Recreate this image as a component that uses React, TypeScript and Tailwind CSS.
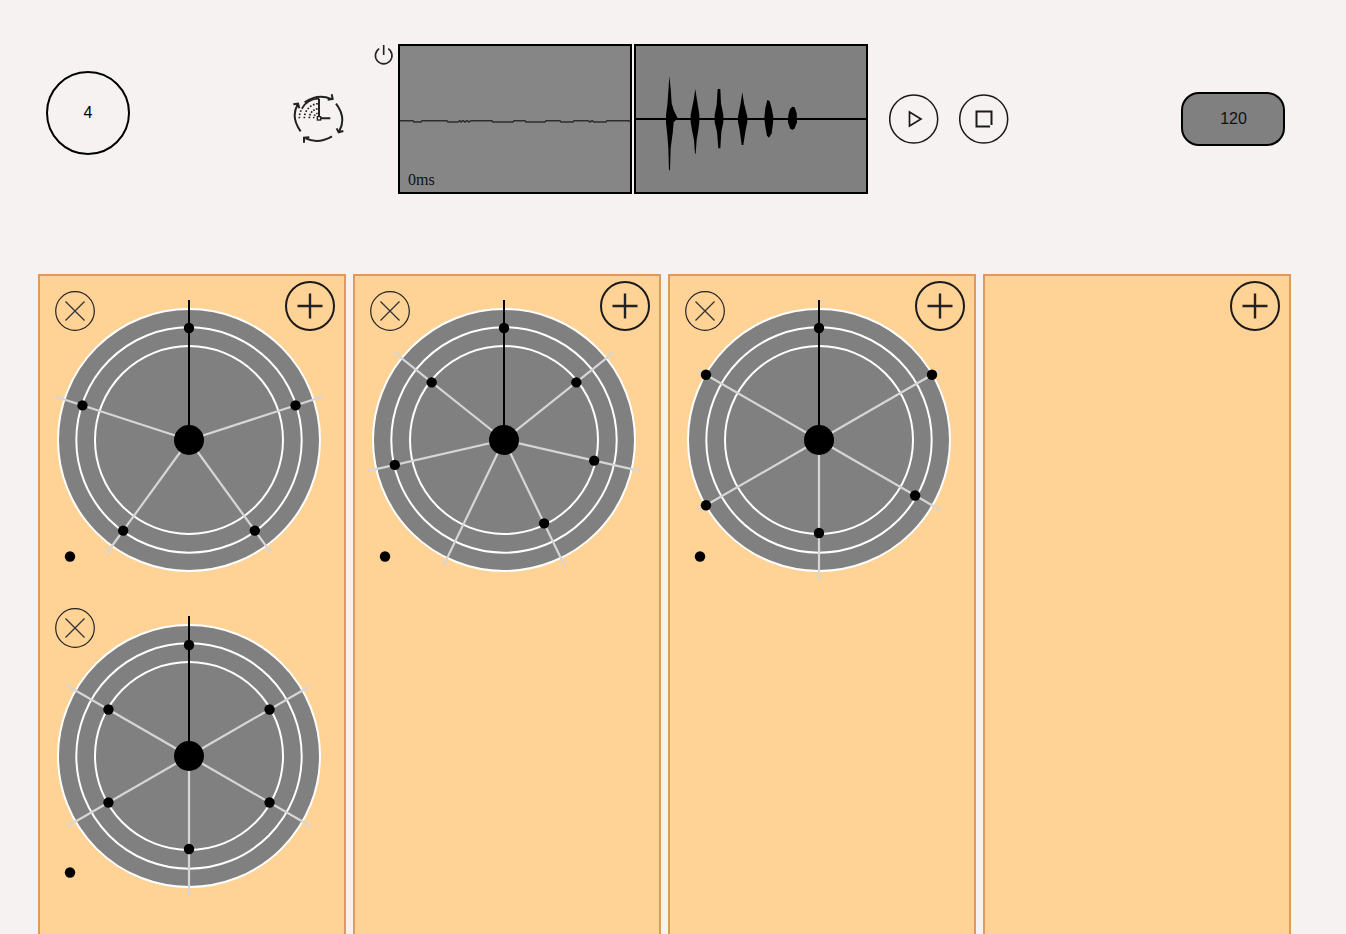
const CENTER = 146;

type Dot = [number, number];

function Wheel({ spokes, dots }: { spokes: number; dots: Dot[] }) {
  const at = (i: number, r: number) => {
    const a = (i / spokes) * Math.PI * 2;
    return [CENTER + Math.sin(a) * r, CENTER - Math.cos(a) * r];
  };
  return (
    <svg width="292" height="292" className="ml-[3px] block">
      <circle cx={CENTER} cy={CENTER} r="131" fill="#808080" stroke="#fff" strokeWidth="2" />
      <circle cx={CENTER} cy={CENTER} r="112.7" fill="none" stroke="#fff" strokeWidth="2" />
      <circle cx={CENTER} cy={CENTER} r="94" fill="none" stroke="#fff" strokeWidth="2" />
      {Array.from({ length: spokes }).map((_, i) => {
        const [x, y] = at(i, 140);
        return i === 0 ? null : <line key={i} x1={CENTER} y1={CENTER} x2={x} y2={y} stroke="#d6d6d6" strokeWidth="2.2" />;
      })}
      <line x1={CENTER} y1={CENTER} x2={CENTER} y2={CENTER - 140} stroke="#000" strokeWidth="2" />
      {dots.map(([i, r]) => {
        const [x, y] = at(i, r);
        return <circle key={i} cx={x} cy={y} r="5.2" fill="#000" />;
      })}
      <circle cx={CENTER} cy={CENTER} r="15" fill="#000" />
      <circle cx="27" cy="262.5" r="5.2" fill="#000" />
    </svg>
  );
}

function CloseButton() {
  return (
    <svg width="40" height="40" viewBox="0 0 40 40" className="absolute left-[15px] top-[15px]">
      <circle cx="20" cy="20" r="19.3" fill="none" stroke="#222" strokeWidth="1.2" />
      <path d="M10.5 10.5 L29.5 29.5 M29.5 10.5 L10.5 29.5" stroke="#333" strokeWidth="1.3" />
    </svg>
  );
}

function AddButton() {
  return (
    <svg width="50" height="50" viewBox="0 0 50 50" className="absolute left-[245px] top-[5px]">
      <circle cx="25" cy="25" r="24" fill="none" stroke="#1a1a1a" strokeWidth="2" />
      <path d="M12.5 25 H37.5 M25 12.5 V37.5" stroke="#222" strokeWidth="2.4" />
    </svg>
  );
}

function WheelBlock({ spokes, dots }: { spokes: number; dots: Dot[] }) {
  return (
    <div className="relative h-[316.5px] pt-[17.5px]">
      <CloseButton />
      <Wheel spokes={spokes} dots={dots} />
    </div>
  );
}

function Panel({ wheels }: { wheels: { spokes: number; dots: Dot[] }[] }) {
  return (
    <div className="relative h-[700px] w-[308px] shrink-0 border-2 border-[#e0985c] bg-[#ffd296]">
      <AddButton />
      {wheels.map((w, i) => (
        <WheelBlock key={i} spokes={w.spokes} dots={w.dots} />
      ))}
    </div>
  );
}

function ClockIcon() {
  return (
    <svg width="56" height="56" viewBox="30 170 168 168" className="ml-[160px] mt-[91px] shrink-0" fill="none" stroke="#222">
      <g strokeWidth="6">
        <path d="M74 204 Q115 176 153 194 M155 180 L158 194 L143 196" />
        <path d="M168 208 Q200 250 178 290 M190 290 L176 294 L170 282" />
        <path d="M156 306 Q115 330 77 312 M72 325 L72 310 L88 309" />
        <path d="M62 291 Q32 250 52 212 M40 210 L54 208 L58 222" />
      </g>
      <path d="M117 193 V247 M122 252 H151" strokeWidth="6" />
      <rect x="112" y="247" width="10" height="10" strokeWidth="4" />
      <g strokeWidth="5">
        <path d="M101 252 A16 16 0 0 1 117 236" strokeDasharray="4 4" />
        <path d="M88 252 A29 29 0 0 1 117 223" strokeDasharray="5 4" />
        <path d="M73 252 A44 44 0 0 1 117 208" strokeDasharray="5 5" />
        <path d="M58 252 A59 59 0 0 1 117 193" strokeDasharray="5 5 5 5 5 5 100" />
      </g>
    </svg>
  );
}

function PowerIcon() {
  return (
    <svg width="22" height="22" viewBox="0 0 22 22" className="ml-[27px] mt-[44px] shrink-0" fill="none" stroke="#222" strokeWidth="1.6">
      <path d="M6.2 4.6 A8.3 8.3 0 1 0 15.2 4.6" />
      <path d="M10.7 1 V11" />
    </svg>
  );
}

function WaveBoxOne() {
  return (
    <div className="relative ml-[3px] mt-[44px] h-[150px] w-[234px] shrink-0 border-2 border-black bg-[#868686]">
      <svg width="230" height="146" className="block">
        <path
          d="M0 74.7 H13 L14 76 H21 L22 74.7 H47 L48 76 H58 L60 74.7 L61 76 L63 74.7 L65 76 L67 74.7 L69 76 L71 74.7 H92 L93 76 H113 L114 74.7 H125 L126 76 H145 L146 74.7 H160 L161 76 H173 L174 74.7 H188 L190 76 L192 74.7 L194 76 H206 L207 74.7 H229 L229 76"
          fill="none"
          stroke="#2e2e2e"
          strokeWidth="1.5"
        />
      </svg>
      <span className="absolute left-[8px] top-[125px] font-['Liberation_Serif',serif] text-[16px] leading-[18px] text-[#111]">0ms</span>
    </div>
  );
}

function WaveBoxTwo() {
  return (
    <div className="ml-[2px] mt-[44px] h-[150px] w-[234px] shrink-0 border-2 border-black bg-[#808080]">
      <svg width="230" height="146" className="block">
        <line x1="0" y1="73" x2="230" y2="73" stroke="#000" strokeWidth="2" />
        <g transform="translate(19 19) scale(0.3333)" fill="#000">
          <path d="M43 33 L47 70 L50 115 L56 135 L68 160 L56 172 L53 205 L47 250 L45 316 L42 316 L40 250 L37 210 L33 175 L33 150 L37 120 L40 80 Z" />
          <path d="M121 72 L126 105 L130 130 L133 150 L133 172 L130 195 L125 225 L122 266 L120 266 L117 225 L111 195 L107 172 L107 150 L111 130 L116 105 Z" />
          <path d="M188 72 L196 72 L198 115 L205 150 L205 172 L199 200 L196 250 L190 250 L186 200 L179 172 L179 150 L185 120 Z" />
          <path d="M262 82 L267 115 L272 135 L277 155 L277 170 L272 195 L265 240 L260 240 L254 195 L249 170 L249 155 L253 135 L257 115 Z" />
          <path d="M337 105 L344 108 L350 130 L355 155 L354 175 L350 205 L342 218 L336 212 L331 185 L328 160 L331 130 Z" />
          <path d="M412 125 L419 127 L425 145 L426 172 L419 190 L412 195 L405 190 L399 172 L400 150 L405 132 Z" />
        </g>
      </svg>
    </div>
  );
}

export default function App() {
  return (
    <div className="h-[934px] w-full overflow-hidden bg-[#f7f2f2] font-['Liberation_Sans',sans-serif]">
      <div className="flex h-[274px] items-start">
        <div className="ml-[46px] mt-[71px] flex h-[84px] w-[84px] shrink-0 items-center justify-center rounded-full border-2 border-black text-[16px] text-black">
          4
        </div>
        <ClockIcon />
        <PowerIcon />
        <WaveBoxOne />
        <WaveBoxTwo />
        <svg width="50" height="50" viewBox="0 0 50 50" className="ml-[20.5px] mt-[94px] shrink-0" fill="none" stroke="#1a1a1a" strokeWidth="1.5">
          <circle cx="24.7" cy="25" r="24" />
          <path d="M20.5 18 V32 L32 25 Z" strokeWidth="1.7" />
        </svg>
        <svg width="50" height="50" viewBox="0 0 50 50" className="ml-[20px] mt-[94px] shrink-0" fill="none" stroke="#1a1a1a" strokeWidth="1.5">
          <circle cx="24.7" cy="25" r="24" />
          <path d="M32.5 31 V17.5 H17.5 V32.5 H31" strokeWidth="2" />
        </svg>
        <div className="ml-[172.5px] mt-[92px] flex h-[54px] w-[104px] shrink-0 items-center justify-center rounded-[18px] border-2 border-black bg-[#808080] pl-px text-[16px] text-[#111]">
          120
        </div>
      </div>
      <div className="flex gap-[7px] pl-[38px]">
        <Panel
          wheels={[
            { spokes: 5, dots: [[0, 112], [1, 112], [2, 112], [3, 112], [4, 112]] },
            { spokes: 6, dots: [[0, 111], [1, 93], [2, 93], [3, 93], [4, 93], [5, 93]] },
          ]}
        />
        <Panel wheels={[{ spokes: 7, dots: [[0, 112], [1, 92.5], [2, 92.5], [3, 92.5], [5, 112], [6, 92.5]] }]} />
        <Panel wheels={[{ spokes: 6, dots: [[0, 112], [1, 130.5], [2, 111], [3, 93], [4, 130.5], [5, 130.5]] }]} />
        <Panel wheels={[]} />
      </div>
    </div>
  );
}
